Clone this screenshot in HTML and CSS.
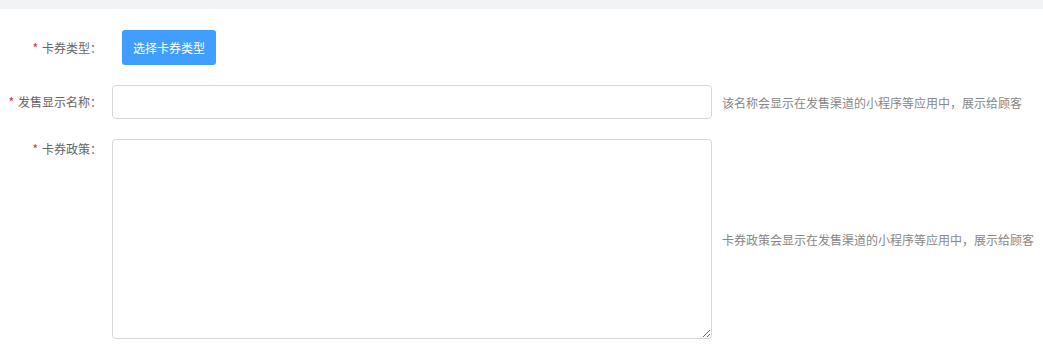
FILE: index.html
```html
<!DOCTYPE html>
<html lang="zh-CN">
<head>
<meta charset="utf-8">
<title>卡券</title>
<link rel="stylesheet" href="styles.css">
</head>
<body>
<div class="topbar"></div>
<form class="form">
  <div class="row row-btn">
    <label class="label"><span class="req">*</span>卡券类型：</label>
    <button type="button" class="btn">选择卡券类型</button>
  </div>
  <div class="row row-input">
    <label class="label"><span class="req">*</span>发售显示名称：</label>
    <input class="input" type="text">
    <span class="help">该名称会显示在发售渠道的小程序等应用中，展示给顾客</span>
  </div>
  <div class="row row-textarea">
    <label class="label label-top"><span class="req">*</span>卡券政策：</label>
    <textarea class="textarea"></textarea>
    <span class="help">卡券政策会显示在发售渠道的小程序等应用中，展示给顾客</span>
  </div>
</form>
</body>
</html>
```

FILE: styles.css
```css
html, body {
  margin: 0;
  padding: 0;
  background: #fff;
  font-family: "Noto Sans CJK SC", "Liberation Sans", sans-serif;
  font-size: 12px;
  color: #606266;
}

.topbar {
  height: 9px;
  background: #f2f3f5;
}

.form {
  padding-top: 21px;
}

.row {
  display: flex;
  align-items: center;
  margin-bottom: 20px;
}

.label {
  width: 112px;
  flex-shrink: 0;
  box-sizing: border-box;
  padding-right: 10px;
  text-align: right;
  line-height: 34px;
  color: #666;
  white-space: nowrap;
}

.label-top {
  align-self: flex-start;
  line-height: 20px;
}

.req {
  color: #f5222d;
  margin-right: 4px;
}

.btn {
  margin-left: 10px;
  height: 35px;
  width: 94px;
  padding: 0;
  border: none;
  border-radius: 3px;
  background: #409eff;
  color: #fff;
  font-family: inherit;
  font-size: 12px;
}

.input {
  width: 600px;
  height: 34px;
  box-sizing: border-box;
  border: 1px solid #d4d6db;
  border-radius: 4px;
  padding: 0 10px;
  font-family: inherit;
  font-size: 12px;
  outline: none;
}

.textarea {
  width: 600px;
  height: 200px;
  box-sizing: border-box;
  border: 1px solid #d4d6db;
  border-radius: 4px;
  padding: 5px 10px;
  font-family: inherit;
  font-size: 12px;
  outline: none;
  display: block;
  margin: 0;
}

.help {
  margin-left: 10px;
  color: #888;
  white-space: nowrap;
}
```
